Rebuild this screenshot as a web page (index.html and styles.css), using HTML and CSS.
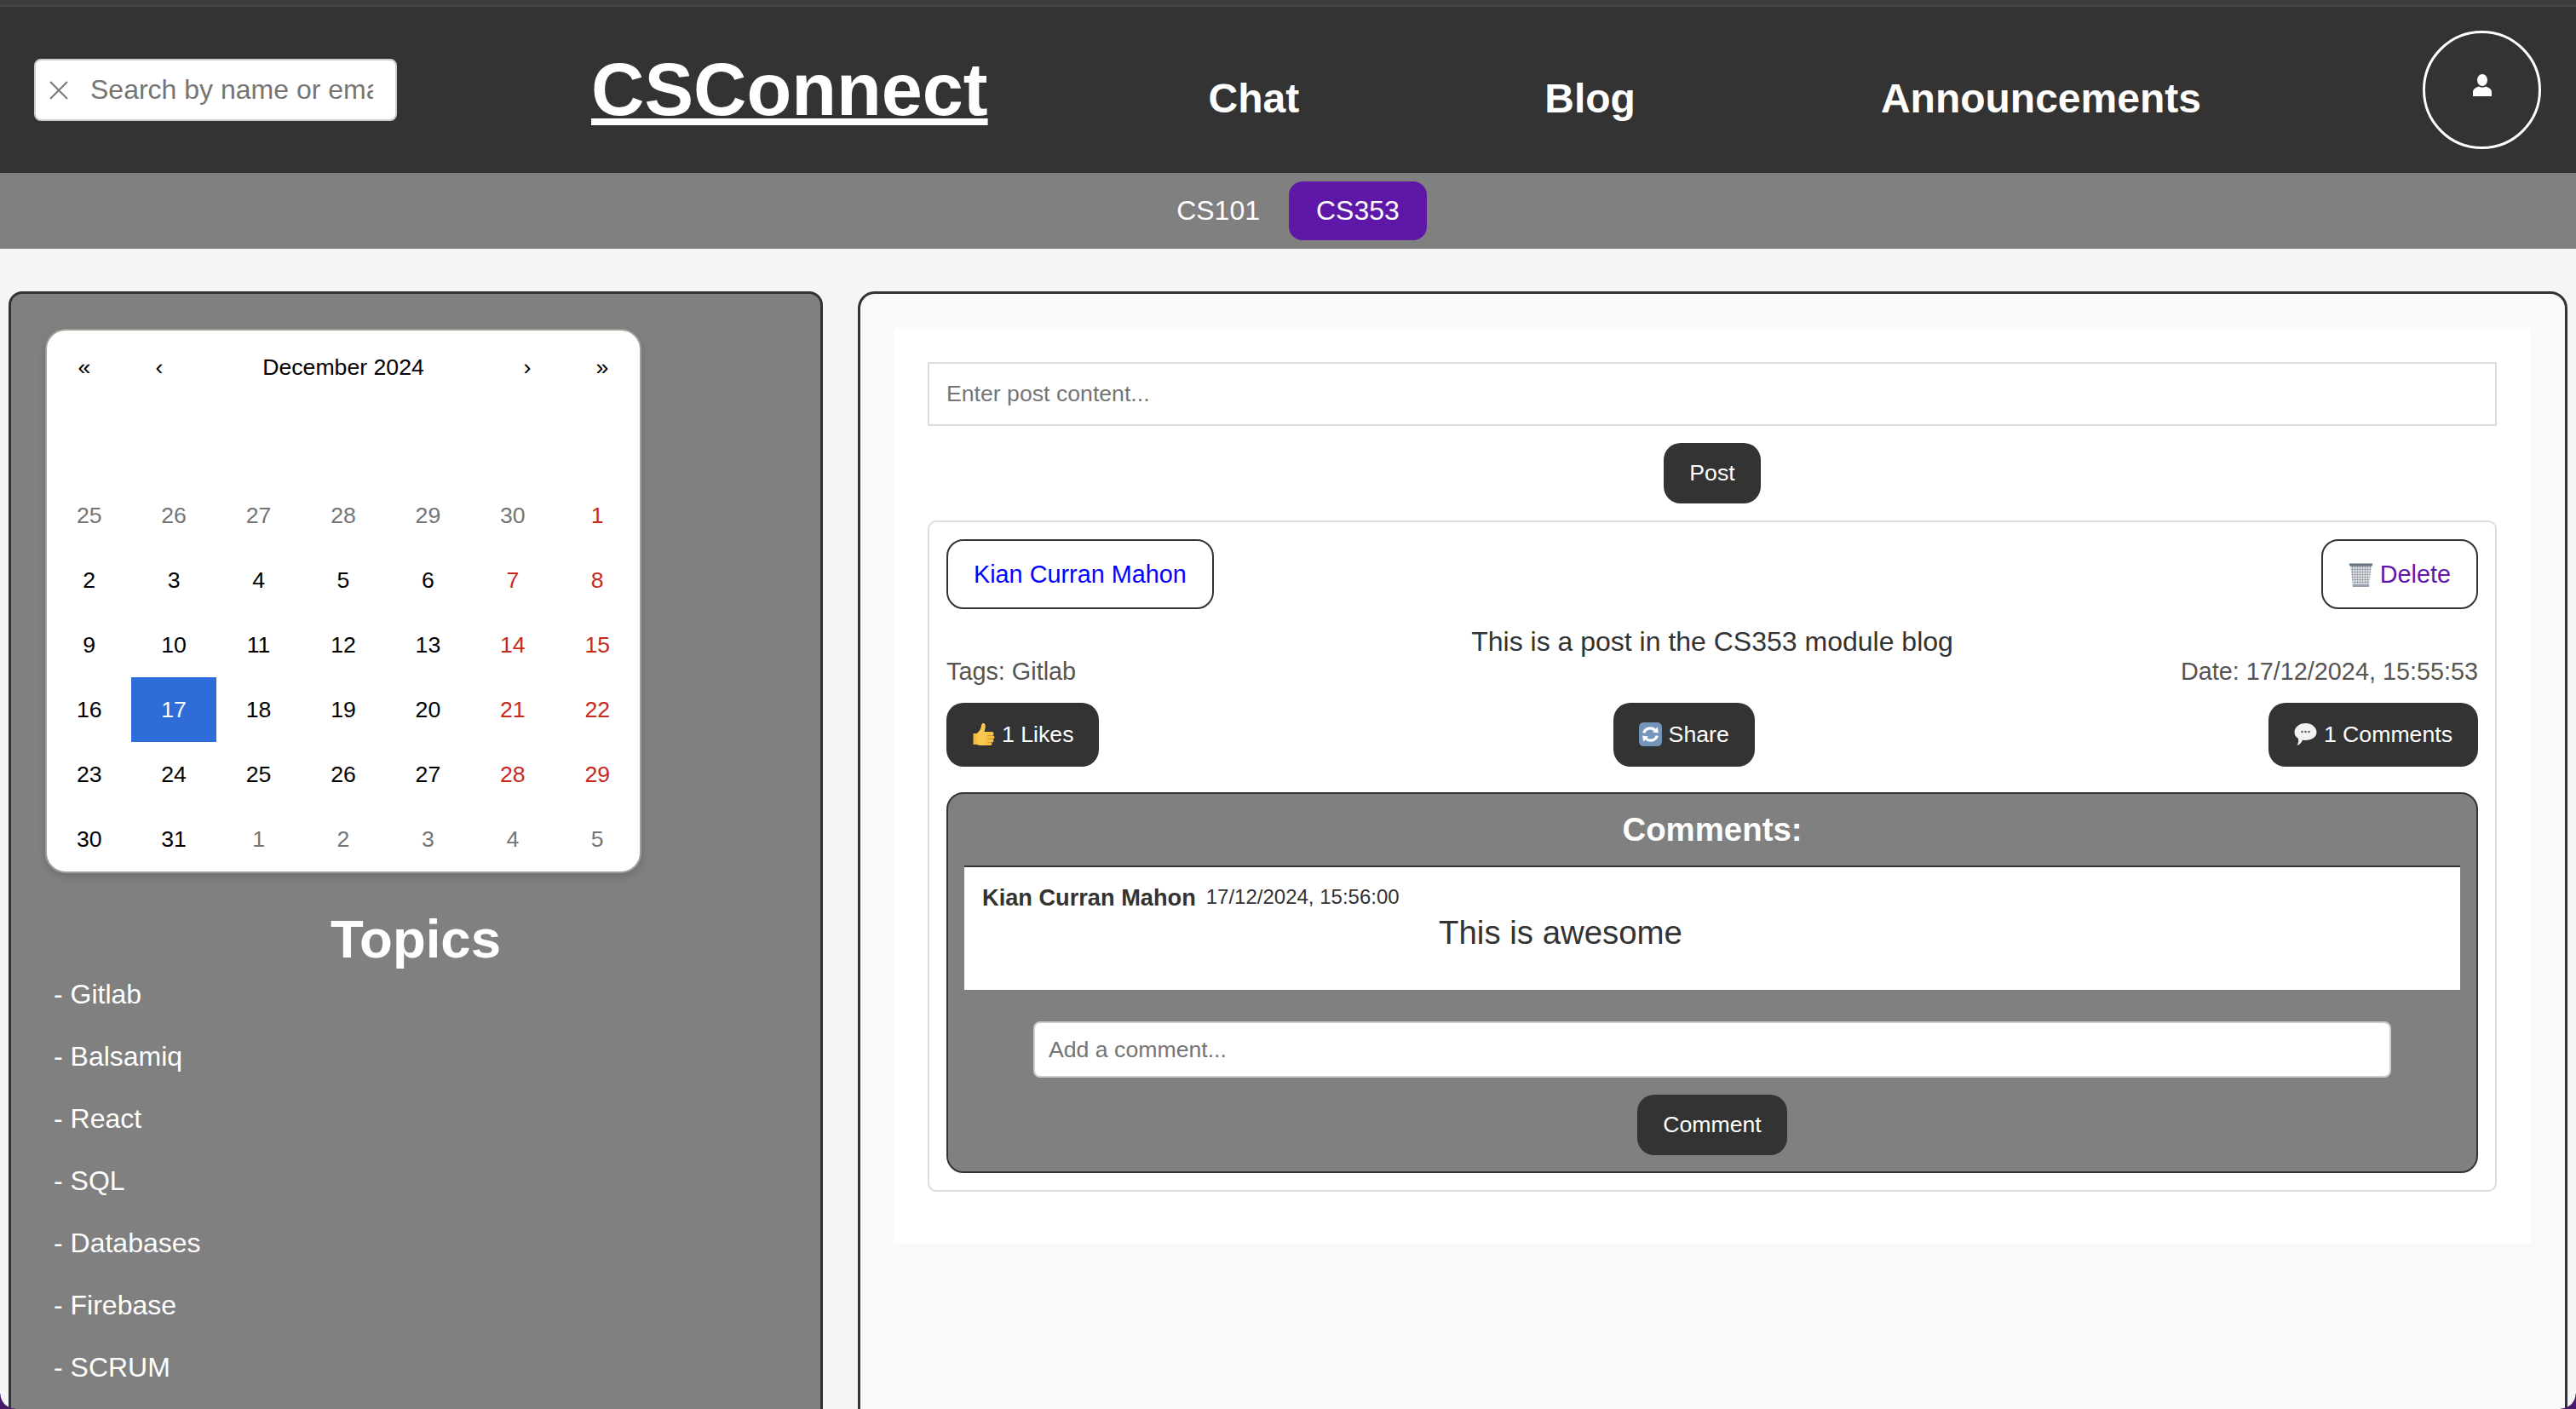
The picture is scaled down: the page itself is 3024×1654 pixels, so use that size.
FILE: index.html
```html
<!DOCTYPE html>
<html>
<head>
	<meta name="viewport" content="width=device-width, initial-scale=1">
	<title>CSConnect</title>
	<link rel="stylesheet" href="styles.css">
</head>
<body>
	<div class="page">
		<header class="navbar">
			<div class="search-box">
				<svg class="search-clear" viewBox="0 0 22 22"><path d="M1 1 L21 21 M21 1 L1 21"/></svg>
				<input class="search-input" type="text" placeholder="Search by name or email">
			</div>
			<h1 class="site-title"><a href="#">CSConnect</a></h1>
			<nav class="nav-links">
				<a href="#">Chat</a>
				<a href="#">Blog</a>
				<a href="#">Announcements</a>
			</nav>
			<button class="avatar">
				<svg viewBox="0 0 24 26"><ellipse cx="12" cy="7" rx="6" ry="7"/><path d="M1 26 V21 C1 17 6 15 8 14.5 C10 16 14 16 16 14.5 C18 15 23 17 23 21 V26 Z"/></svg>
			</button>
		</header>

		<div class="module-bar">
			<a href="#" class="module">CS101</a>
			<a href="#" class="module active">CS353</a>
		</div>

		<main class="content">
			<aside class="sidebar">
				<div class="calendar">
					<div class="cal-nav">
						<button>«</button>
						<button>‹</button>
						<button class="cal-label">December 2024</button>
						<button>›</button>
						<button>»</button>
					</div>
					<div class="cal-days">
						<button class="other">25</button><button class="other">26</button><button class="other">27</button><button class="other">28</button><button class="other">29</button><button class="other">30</button><button class="weekend">1</button>
						<button>2</button><button>3</button><button>4</button><button>5</button><button>6</button><button class="weekend">7</button><button class="weekend">8</button>
						<button>9</button><button>10</button><button>11</button><button>12</button><button>13</button><button class="weekend">14</button><button class="weekend">15</button>
						<button>16</button><button class="today">17</button><button>18</button><button>19</button><button>20</button><button class="weekend">21</button><button class="weekend">22</button>
						<button>23</button><button>24</button><button>25</button><button>26</button><button>27</button><button class="weekend">28</button><button class="weekend">29</button>
						<button>30</button><button>31</button><button class="other">1</button><button class="other">2</button><button class="other">3</button><button class="other">4</button><button class="other">5</button>
					</div>
				</div>
				<h2 class="topics-title">Topics</h2>
				<ul class="topics">
					<li>- Gitlab</li>
					<li>- Balsamiq</li>
					<li>- React</li>
					<li>- SQL</li>
					<li>- Databases</li>
					<li>- Firebase</li>
					<li>- SCRUM</li>
				</ul>
			</aside>

			<section class="blog-panel">
				<div class="blog">
					<input class="post-input" type="text" placeholder="Enter post content...">
					<button class="dark-btn">Post</button>

					<article class="post">
						<div class="post-top">
							<button class="outline-btn author">Kian Curran Mahon</button>
							<button class="outline-btn delete">
								<svg class="emoji" viewBox="0 0 29 28">
									<defs>
										<pattern id="mesh" width="3" height="3" patternUnits="userSpaceOnUse"><rect width="3" height="3" fill="#e4e7ea"/><circle cx="1.5" cy="1.5" r="1.1" fill="#7f8790"/></pattern>
									</defs>
									<path d="M2 3 H27 L24 26 H5 Z" fill="url(#mesh)"/>
									<path d="M0.5 0.5 H28.5 L27.5 3.5 H1.5 Z" fill="#65717f"/>
									<path d="M4.5 25 H24.5 L24 28 H5 Z" fill="#97a3b0"/>
								</svg>Delete</button>
						</div>
						<p class="post-text">This is a post in the CS353 module blog</p>
						<div class="post-meta">
							<span>Tags: Gitlab</span>
							<span>Date: 17/12/2024, 15:55:53</span>
						</div>
						<div class="post-actions">
							<button class="action-btn">
								<svg class="emoji" viewBox="0 0 26 28">
									<path d="M1 13 H6 V26 H1 Z" fill="#f4b93f"/>
									<path d="M5 13 C8 11 10 8 10.5 4 C10.8 1.5 12 0.5 13.5 1 C15.5 1.8 15.5 5 15 7 L14 11 H18 V27 H9 C7 27 5.5 26 5 25 Z" fill="#fbc94f"/>
									<rect x="15" y="11" width="10" height="4.5" rx="2.2" fill="#f9c044"/>
									<rect x="15" y="15.5" width="11" height="4" rx="2" fill="#f7bb40"/>
									<rect x="15" y="19.5" width="10" height="4" rx="2" fill="#f9c044"/>
									<rect x="15" y="23.5" width="8" height="3.5" rx="1.7" fill="#f7bb40"/>
								</svg>1 Likes</button>
							<button class="action-btn">
								<svg class="emoji" viewBox="0 0 26 27">
									<rect width="26" height="27" rx="5" fill="#7595b9"/>
									<path d="M5.5 12 C6.5 7.5 13 4.5 18 8.5" fill="none" stroke="#fff" stroke-width="3"/>
									<path d="M15.5 11 L22 12 L21 5 Z" fill="#fff"/>
									<path d="M20.5 15 C19.5 19.5 13 22.5 8 18.5" fill="none" stroke="#fff" stroke-width="3"/>
									<path d="M10.5 16 L4 15 L5 22 Z" fill="#fff"/>
								</svg>Share</button>
							<button class="action-btn">
								<svg class="emoji" viewBox="0 0 27 27">
									<path d="M13.5 0.5 C21 0.5 26.5 5.5 26.5 11 C26.5 16.5 21 20.5 13.5 20.5 C12 20.5 11 20.4 10 20.2 C9 23 7 25.5 3.5 26.5 C5 24 5.5 21.5 5 18.5 C2 16.5 0.5 14 0.5 11 C0.5 5.5 6 0.5 13.5 0.5 Z" fill="#f1f2f3"/>
									<circle cx="9.5" cy="10.5" r="1.2" fill="#555"/><circle cx="13.5" cy="10.5" r="1.2" fill="#555"/><circle cx="17.5" cy="10.5" r="1.2" fill="#555"/>
								</svg>1 Comments</button>
						</div>

						<div class="comments">
							<h3 class="comments-title">Comments:</h3>
							<div class="comment">
								<div class="comment-head">
									<strong>Kian Curran Mahon</strong>
									<span>17/12/2024, 15:56:00</span>
								</div>
								<p class="comment-text">This is awesome</p>
							</div>
							<input class="comment-input" type="text" placeholder="Add a comment...">
							<button class="dark-btn comment-btn">Comment</button>
						</div>
					</article>
				</div>
			</section>
		</main>

		<div class="corner corner-left"></div>
		<div class="corner corner-right"></div>
	</div>
</body>
</html>
```

FILE: styles.css
```css
* {
	box-sizing: border-box;
}
html, body {
	margin: 0;
	padding: 0;
	height: 100%;
	overflow: hidden;
}
body {
	font-family: "Liberation Sans", Arial, sans-serif;
	background-color: #f5f5f5;
	color: #333;
}
button, input {
	font-family: "Liberation Sans", Arial, sans-serif;
	font-size: 26.67px;
}
input::placeholder {
	color: #757575;
}
button {
	cursor: pointer;
}
.page {
	position: relative;
	height: 1654px;
	overflow: hidden;
}

/* top bar */
.navbar {
	display: flex;
	align-items: center;
	height: 203px;
	padding-left: 40px;
	padding-top: 2px;
	background-color: #333;
	border-top: 6px solid #3c3c3c;
	box-shadow: inset 0 2px 0 #444;
}
.search-box {
	display: flex;
	align-items: center;
	width: 426px;
	height: 73px;
	padding: 0 26px 0 16px;
	background-color: #fff;
	border: 2px solid #ccc;
	border-radius: 8px;
}
.search-clear {
	flex: none;
	width: 22px;
	height: 22px;
	margin-right: 26px;
	fill: none;
	stroke: #777;
	stroke-width: 2;
}
.search-input {
	flex: 1;
	min-width: 0;
	padding: 0;
	border: none;
	outline: none;
	font-size: 32px;
	background: transparent;
}
.site-title {
	margin: 0 0 0 228px;
	font-size: 86.4px;
	line-height: 1;
}
.site-title a {
	color: #fff;
	text-decoration: underline;
	text-decoration-thickness: 8px;
	text-underline-offset: 4px;
}
.nav-links {
	display: flex;
	gap: 288px;
	margin-left: 259px;
	margin-top: 20px;
}
.nav-links a {
	color: #fff;
	font-size: 48px;
	font-weight: bold;
	text-decoration: none;
}
.avatar {
	display: flex;
	align-items: center;
	justify-content: center;
	width: 139px;
	height: 139px;
	margin-left: auto;
	margin-right: 41px;
	padding: 0;
	background: transparent;
	border: 3px solid #fff;
	border-radius: 50%;
}
.avatar svg {
	width: 24px;
	height: 26px;
	fill: #fff;
	margin-bottom: 12px;
}

/* module tabs */
.module-bar {
	display: flex;
	justify-content: center;
	gap: 2px;
	height: 89px;
	padding-top: 10px;
	background-color: #808080;
}
.module {
	height: 69px;
	padding: 0 32px;
	color: #fff;
	font-size: 32px;
	line-height: 69px;
	text-decoration: none;
	border-radius: 16px;
}
.module.active {
	background-color: #5f17a8;
}

/* page columns */
.content {
	display: flex;
	gap: 41px;
	padding: 50px 10px 0;
}
.sidebar {
	flex: none;
	width: 956px;
	height: 1400px;
	padding: 41px 40px;
	background-color: #808080;
	border: 3px solid #333;
	border-radius: 16px;
}

/* calendar */
.calendar {
	width: 700px;
	background-color: #fff;
	border: 2px solid #a0a096;
	border-radius: 24px;
	box-shadow: 0 4px 10px rgba(0, 0, 0, 0.15);
	color: #000;
}
.calendar button {
	padding: 0;
	background: none;
	border: none;
	color: inherit;
}
.cal-nav {
	display: flex;
	height: 86px;
	margin-bottom: 93px;
}
.cal-nav button {
	flex: none;
	width: 88px;
}
.cal-nav .cal-label {
	flex: 1;
	width: auto;
}
.cal-days {
	display: grid;
	grid-template-columns: repeat(7, 1fr);
	grid-auto-rows: 76px;
}
.calendar .other {
	color: #757575;
}
.calendar .weekend {
	color: #c9281c;
}
.calendar .today {
	background-color: #2e6dd9;
	color: #fff;
}

/* topics */
.topics-title {
	margin: 47px 0 0;
	color: #fff;
	font-size: 63.5px;
	line-height: 60px;
	text-align: center;
}
.topics {
	margin: -1px 0 0;
	padding: 0 0 0 10px;
	list-style: none;
	color: #fff;
	font-size: 32px;
}
.topics li {
	height: 73px;
	line-height: 73px;
}

/* blog column */
.blog-panel {
	flex: none;
	width: 2007px;
	height: 1400px;
	padding: 40px 40px 0 39px;
	background-color: #f9f9f9;
	border: 3px solid #333;
	border-radius: 20px;
}
.blog {
	display: flex;
	flex-direction: column;
	align-items: center;
	gap: 20px;
	padding: 40px 40px 61px;
	background-color: #fff;
}
.post-input {
	width: 100%;
	height: 75px;
	padding: 0 20px;
	border: 2px solid #ddd;
	outline: none;
}
.dark-btn {
	height: 71px;
	padding: 0 30px;
	color: #fff;
	background-color: #333;
	border: none;
	border-radius: 20px;
}
.post {
	width: 100%;
	padding: 20px;
	border: 2px solid #ddd;
	border-radius: 10px;
}
.post-top {
	display: flex;
	justify-content: space-between;
}
.outline-btn {
	height: 82px;
	padding: 0 30px;
	font-size: 28.8px;
	background-color: #fff;
	border: 2px solid #333;
	border-radius: 20px;
}
.author {
	color: #0000ff;
}
.delete {
	color: #5f17a8;
}
.emoji {
	display: inline-block;
	width: 27px;
	height: 28px;
	margin-right: 8px;
	vertical-align: -5px;
}
.delete .emoji {
	width: 29px;
}
.post-text {
	margin: 20px 0 0;
	font-size: 32px;
	line-height: 37px;
	text-align: center;
}
.post-meta {
	display: flex;
	justify-content: space-between;
	color: #555;
	font-size: 28.8px;
	line-height: 33px;
}
.post-actions {
	display: flex;
	justify-content: space-between;
	margin-top: 20px;
}
.action-btn {
	height: 75px;
	padding: 0 30px;
	color: #fff;
	background-color: #333;
	border: none;
	border-radius: 20px;
}

/* comments */
.comments {
	display: flex;
	flex-direction: column;
	align-items: center;
	margin-top: 30px;
	padding: 20px 19px 19px;
	background-color: #808080;
	border: 2px solid #333;
	border-radius: 20px;
}
.comments-title {
	margin: 0 0 20px;
	color: #fff;
	font-size: 38.4px;
	line-height: 44px;
}
.comment {
	width: 100%;
	height: 146px;
	padding: 19px 21px 0;
	background-color: #fff;
	border-top: 2px solid #333;
}
.comment-head {
	display: flex;
	align-items: center;
	gap: 12px;
	height: 34px;
}
.comment-head strong {
	font-size: 27.2px;
}
.comment-head span {
	margin-bottom: 3px;
	font-size: 24px;
}
.comment-text {
	margin: 2px 0 0;
	padding-right: 356px;
	font-size: 38.4px;
	line-height: 44px;
	text-align: center;
}
.comment-input {
	width: 1594px;
	height: 66px;
	margin-top: 37px;
	padding: 0 16px;
	background-color: #fff;
	border: 2px solid #ccc;
	border-radius: 8px;
	outline: none;
}
.comment-btn {
	margin-top: 20px;
}

/* rounded window corners at the bottom of the capture */
.corner {
	position: absolute;
	bottom: 0;
	width: 18px;
	height: 18px;
}
.corner-left {
	left: 0;
	background: radial-gradient(circle at 100% 0, transparent 17px, #47176c 18px);
}
.corner-right {
	right: 0;
	background: radial-gradient(circle at 0 0, transparent 17px, #47176c 18px);
}
```
